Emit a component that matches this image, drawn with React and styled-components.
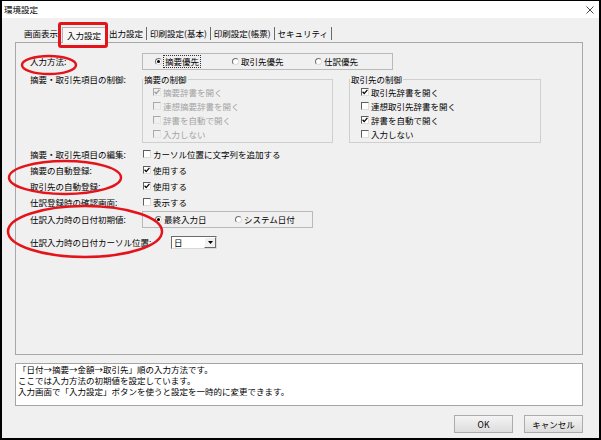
import React from "react";
import styled, { createGlobalStyle } from "styled-components";

// 環境設定 dialog, 入力設定 tab, with the red hand-drawn marks of the screenshot on top.

const GlobalStyle = createGlobalStyle`
  html, body { margin: 0; padding: 0; background: #fff; }
  body { font-family: "Noto Sans CJK JP", "Noto Sans", sans-serif; }
  * { box-sizing: border-box; }
`;

const Window = styled.div`
  position: relative;
  width: 601px;
  height: 440px;
  border: 2px solid #000;
  border-top-width: 1px;
  display: flex;
  flex-direction: column;
  background: #f0f0f0;
  font-size: 8.5px;
  line-height: 11px;
  color: #000;
  overflow: hidden;
`;

const TitleBar = styled.div`
  flex: none;
  height: 17px;
  background: #fff;
  display: flex;
  align-items: center;
  justify-content: space-between;
  padding: 0 5px 0 2px;
`;

const Client = styled.div`
  flex: 1;
  display: flex;
  flex-direction: column;
  padding: 8px 16px 0 13px;
`;

const TabBar = styled.div`
  flex: none;
  height: 16px;
  display: flex;
  align-items: flex-end;
  padding-left: 6px;
  position: relative;
  z-index: 1;
`;

const Tab = styled.div`
  height: ${(p) => (p.$active ? 16 : 13)}px;
  padding: ${(p) => (p.$active ? "1px 4px 0" : "0 3px")};
  margin-bottom: ${(p) => (p.$active ? -1 : 2)}px;
  white-space: nowrap;
  background: ${(p) => (p.$active ? "#f7f7f7" : "transparent")};
  border: ${(p) => (p.$active ? "1px solid #b4b4b4" : "none")};
  border-bottom: none;
  border-right: 1px solid
    ${(p) => (p.$active ? "#b4b4b4" : p.$sep ? "#6a6a6a" : "transparent")};
  line-height: 12px;
`;

const Panel = styled.div`
  flex: none;
  height: 313px;
  border: 1px solid #a7a7a7;
  background: #f0f0f0;
  padding: 10px 0 0 14px;
  display: flex;
  flex-direction: column;
`;

const Row = styled.div`
  display: flex;
  align-items: ${(p) => (p.$top ? "flex-start" : "center")};
  height: ${(p) => (p.$h ? `${p.$h}px` : "auto")};
  margin-top: ${(p) => p.$mt || 0}px;
`;

const Label = styled.div`
  flex: none;
  width: 112px;
  white-space: nowrap;
  line-height: 11px;
`;

const RadioFrame = styled.div`
  width: ${(p) => p.$w}px;
  height: 17px;
  border: 1px solid #b9b9b9;
  display: flex;
  align-items: center;
  padding-left: 12px;
`;

const RadioOption = styled.div`
  display: flex;
  align-items: center;
  gap: 2px;
  width: ${(p) => (p.$w ? `${p.$w}px` : "auto")};
  white-space: nowrap;
`;

const RadioDot = styled.span`
  width: 7px;
  height: 7px;
  border-radius: 50%;
  border: 1px solid;
  border-color: #6f6f6f #dcdcdc #dcdcdc #6f6f6f;
  background: #fff;
  display: flex;
  align-items: center;
  justify-content: center;

  &::after {
    content: "";
    width: 3px;
    height: 3px;
    border-radius: 50%;
    background: ${(p) => (p.$on ? "#000" : "transparent")};
  }
`;

const Focused = styled.span`
  outline: 1px dotted #333;
  padding: 0 1px;
`;

const Groups = styled.div`
  display: flex;
  gap: 16px;
`;

const GroupBox = styled.fieldset`
  width: ${(p) => p.$w}px;
  margin: 0;
  padding: 0 0 1px 0;
  border: 1px solid #cfcfcf;
  min-width: 0;
`;

const Legend = styled.legend`
  padding: 0 1px;
  margin-left: 0;
  line-height: 11px;
`;

const CheckItem = styled.div`
  display: flex;
  align-items: center;
  gap: 2px;
  height: ${(p) => p.$h || 14}px;
  white-space: nowrap;
  color: ${(p) => (p.$disabled ? "#a3a3a3" : "#000")};
  margin-left: ${(p) => p.$ml || 0}px;
`;

const Box = styled.span`
  flex: none;
  width: 8px;
  height: 8px;
  border: 1px solid;
  border-color: ${(p) =>
    p.$disabled ? "#a8a8a8 #e6e6e6 #e6e6e6 #a8a8a8" : "#5e5e5e #dedede #dedede #5e5e5e"};
  background: ${(p) => (p.$disabled ? "#f0f0f0" : "#fff")};
  display: flex;
  align-items: center;
  justify-content: center;
`;

const Select = styled.div`
  margin-left: 29px;
  width: 46px;
  height: 13px;
  background: #fff;
  border: 1px solid;
  border-color: #6b6b6b #d8d8d8 #d8d8d8 #6b6b6b;
  display: flex;
  align-items: center;
  justify-content: space-between;
  padding-left: 2px;
`;

const SelectArrow = styled.span`
  width: 12px;
  height: 11px;
  background: #f0f0f0;
  border: 1px solid;
  border-color: #fff #6b6b6b #6b6b6b #fff;
  display: flex;
  align-items: center;
  justify-content: center;
`;

const Description = styled.div`
  flex: none;
  margin-top: 8px;
  height: 43px;
  background: #fff;
  border: 1px solid #a5a5a5;
  padding: 0 2px;
  line-height: 11px;
  white-space: nowrap;
`;

const ButtonRow = styled.div`
  flex: none;
  margin-top: 9px;
  display: flex;
  justify-content: flex-end;
  gap: 11px;
`;

const Button = styled.button`
  width: 59px;
  height: 18px;
  font: inherit;
  font-size: 8.5px;
  color: #000;
  border: 1px solid #acacac;
  background: linear-gradient(#f4f4f4, #dddddd);
  padding: 0;
`;

const Marks = styled.svg`
  position: absolute;
  top: -1px;
  left: -2px;
  pointer-events: none;
  z-index: 5;
`;

function Check({ on, disabled }) {
  return (
    <Box $disabled={disabled}>
      {on && (
        <svg width="6" height="6" viewBox="0 0 6 6">
          <path
            d="M0.6 2.8 L2.2 4.6 L5.4 0.9"
            fill="none"
            stroke={disabled ? "#9a9a9a" : "#000"}
            strokeWidth="1.3"
          />
        </svg>
      )}
    </Box>
  );
}

function CheckLine({ on, disabled, children, h, ml }) {
  return (
    <CheckItem $disabled={disabled} $h={h} $ml={ml}>
      <Check on={on} disabled={disabled} />
      <span>{children}</span>
    </CheckItem>
  );
}

const tabs = ["画面表示", "入力設定", "出力設定", "印刷設定(基本)", "印刷設定(帳票)", "セキュリティ"];
const activeTab = 1;

const summaryItems = [
  { text: "摘要辞書を開く", on: true },
  { text: "連想摘要辞書を開く", on: false },
  { text: "辞書を自動で開く", on: false },
  { text: "入力しない", on: false },
];

const partnerItems = [
  { text: "取引先辞書を開く", on: true },
  { text: "連想取引先辞書を開く", on: false },
  { text: "辞書を自動で開く", on: true },
  { text: "入力しない", on: false },
];

export default function App() {
  return (
    <>
      <GlobalStyle />
      <Window>
        <TitleBar>
          <span>環境設定</span>
          <svg width="8" height="8" viewBox="0 0 8 8">
            <path d="M0.5 0.5 L7.5 7.5 M7.5 0.5 L0.5 7.5" stroke="#333" strokeWidth="0.9" />
          </svg>
        </TitleBar>

        <Client>
          <TabBar>
            {tabs.map((t, i) => (
              <Tab key={t} $active={i === activeTab} $sep={i !== activeTab - 1}>
                {t}
              </Tab>
            ))}
          </TabBar>

          <Panel>
            <Row $h={17}>
              <Label>入力方法:</Label>
              <RadioFrame $w={251}>
                <RadioOption $w={77}>
                  <RadioDot $on />
                  <Focused>摘要優先</Focused>
                </RadioOption>
                <RadioOption $w={83}>
                  <RadioDot />
                  <span>取引先優先</span>
                </RadioOption>
                <RadioOption>
                  <RadioDot />
                  <span>仕訳優先</span>
                </RadioOption>
              </RadioFrame>
            </Row>

            <Row $top $mt={4}>
              <Label>摘要・取引先項目の制御:</Label>
              <Groups>
                <GroupBox $w={191}>
                  <Legend>摘要の制御</Legend>
                  {summaryItems.map((it) => (
                    <CheckLine key={it.text} on={it.on} disabled ml={10}>
                      {it.text}
                    </CheckLine>
                  ))}
                </GroupBox>
                <GroupBox $w={192}>
                  <Legend>取引先の制御</Legend>
                  {partnerItems.map((it) => (
                    <CheckLine key={it.text} on={it.on} ml={11}>
                      {it.text}
                    </CheckLine>
                  ))}
                </GroupBox>
              </Groups>
            </Row>

            <Row $h={16} $mt={3}>
              <Label>摘要・取引先項目の編集:</Label>
              <CheckLine h={16} ml={1}>カーソル位置に文字列を追加する</CheckLine>
            </Row>
            <Row $h={16}>
              <Label>摘要の自動登録:</Label>
              <CheckLine h={16} ml={1} on>使用する</CheckLine>
            </Row>
            <Row $h={16}>
              <Label>取引先の自動登録:</Label>
              <CheckLine h={16} ml={1} on>使用する</CheckLine>
            </Row>
            <Row $h={16}>
              <Label>仕訳登録時の確認画面:</Label>
              <CheckLine h={16} ml={1}>表示する</CheckLine>
            </Row>

            <Row $h={17} $mt={1}>
              <Label>仕訳入力時の日付初期値:</Label>
              <RadioFrame $w={171}>
                <RadioOption $w={80}>
                  <RadioDot $on />
                  <span>最終入力日</span>
                </RadioOption>
                <RadioOption>
                  <RadioDot />
                  <span>システム日付</span>
                </RadioOption>
              </RadioFrame>
            </Row>

            <Row $h={17} $mt={6}>
              <Label>仕訳入力時の日付カーソル位置:</Label>
              <Select>
                <span>日</span>
                <SelectArrow>
                  <svg width="5" height="3" viewBox="0 0 5 3">
                    <path d="M0 0 H5 L2.5 3 Z" fill="#000" />
                  </svg>
                </SelectArrow>
              </Select>
            </Row>
          </Panel>

          <Description>
            「日付→摘要→金額→取引先」順の入力方法です。
            <br />
            ここでは入力方法の初期値を設定しています。
            <br />
            入力画面で「入力設定」ボタンを使うと設定を一時的に変更できます。
          </Description>

          <ButtonRow>
            <Button>OK</Button>
            <Button>キャンセル</Button>
          </ButtonRow>
        </Client>

        <Marks width="601" height="440" viewBox="0 0 601 440">
          <rect x="59.5" y="23.5" width="47" height="23" rx="1.5" fill="none" stroke="#e4141b" strokeWidth="3" />
          <ellipse cx="49" cy="65" rx="27" ry="9" fill="none" stroke="#e4141b" strokeWidth="2.5" />
          <ellipse cx="65" cy="177.5" rx="56" ry="16.5" fill="none" stroke="#e4141b" strokeWidth="2.5" />
          <ellipse cx="85" cy="231.5" rx="77" ry="25.5" fill="none" stroke="#e4141b" strokeWidth="2.5" />
        </Marks>
      </Window>
    </>
  );
}
